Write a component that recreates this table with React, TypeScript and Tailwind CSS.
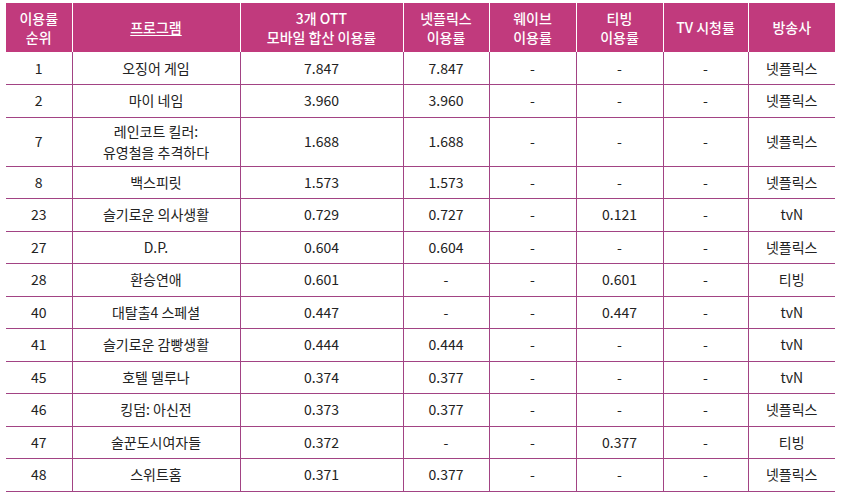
type Row = {
  rank: string;
  title: string[];
  total: string;
  netflix: string;
  wavve: string;
  tving: string;
  tv: string;
  channel: string;
};

const rows: Row[] = [
  { rank: "1", title: ["오징어 게임"], total: "7.847", netflix: "7.847", wavve: "-", tving: "-", tv: "-", channel: "넷플릭스" },
  { rank: "2", title: ["마이 네임"], total: "3.960", netflix: "3.960", wavve: "-", tving: "-", tv: "-", channel: "넷플릭스" },
  { rank: "7", title: ["레인코트 킬러:", "유영철을 추격하다"], total: "1.688", netflix: "1.688", wavve: "-", tving: "-", tv: "-", channel: "넷플릭스" },
  { rank: "8", title: ["백스피릿"], total: "1.573", netflix: "1.573", wavve: "-", tving: "-", tv: "-", channel: "넷플릭스" },
  { rank: "23", title: ["슬기로운 의사생활"], total: "0.729", netflix: "0.727", wavve: "-", tving: "0.121", tv: "-", channel: "tvN" },
  { rank: "27", title: ["D.P."], total: "0.604", netflix: "0.604", wavve: "-", tving: "-", tv: "-", channel: "넷플릭스" },
  { rank: "28", title: ["환승연애"], total: "0.601", netflix: "-", wavve: "-", tving: "0.601", tv: "-", channel: "티빙" },
  { rank: "40", title: ["대탈출4 스페셜"], total: "0.447", netflix: "-", wavve: "-", tving: "0.447", tv: "-", channel: "tvN" },
  { rank: "41", title: ["슬기로운 감빵생활"], total: "0.444", netflix: "0.444", wavve: "-", tving: "-", tv: "-", channel: "tvN" },
  { rank: "45", title: ["호텔 델루나"], total: "0.374", netflix: "0.377", wavve: "-", tving: "-", tv: "-", channel: "tvN" },
  { rank: "46", title: ["킹덤: 아신전"], total: "0.373", netflix: "0.377", wavve: "-", tving: "-", tv: "-", channel: "넷플릭스" },
  { rank: "47", title: ["술꾼도시여자들"], total: "0.372", netflix: "-", wavve: "-", tving: "0.377", tv: "-", channel: "티빙" },
  { rank: "48", title: ["스위트홈"], total: "0.371", netflix: "0.377", wavve: "-", tving: "-", tv: "-", channel: "넷플릭스" },
];

const headers: { lines: string[]; underline?: boolean }[] = [
  { lines: ["이용률", "순위"] },
  { lines: ["프로그램"], underline: true },
  { lines: ["3개 OTT", "모바일 합산 이용률"] },
  { lines: ["넷플릭스", "이용률"] },
  { lines: ["웨이브", "이용률"] },
  { lines: ["티빙", "이용률"] },
  { lines: ["TV 시청률"] },
  { lines: ["방송사"] },
];

const widths = ["w-[66px]", "w-[168px]", "w-[163px]", "w-[86px]", "w-[87px]", "w-[87px]", "w-[85px]", "w-[87px]"];

export default function App() {
  return (
    <main className="min-h-[496px] w-[842px] bg-white pl-[6px] pt-[3px] font-['Noto_Sans_CJK_KR','Noto_Sans',sans-serif] text-[14px] text-[#222]">
      <table className="w-[829px] table-fixed border-collapse">
        <colgroup>
          {widths.map((w, i) => (
            <col key={i} className={w} />
          ))}
        </colgroup>
        <thead>
          <tr className="h-[49px] bg-[#c13a7d] text-white">
            {headers.map((h, i) => (
              <th
                key={i}
                className={`p-0 text-center align-middle text-[14px] font-medium leading-[19px] ${i > 0 ? "border-l border-white" : ""}`}
              >
                {h.lines.map((line) => (
                  <div key={line} className={h.underline ? "underline underline-offset-2" : ""}>
                    {line}
                  </div>
                ))}
              </th>
            ))}
          </tr>
        </thead>
        <tbody>
          {rows.map((row) => {
            const cells = [row.rank, row.title, row.total, row.netflix, row.wavve, row.tving, row.tv, row.channel];
            const tall = row.title.length > 1;
            return (
              <tr key={row.rank} className={`border-b border-[#a24384] ${tall ? "h-[49px]" : "h-[32.5px]"}`}>
                {cells.map((cell, i) => (
                  <td
                    key={i}
                    className={`p-0 text-center align-middle leading-[21px] ${i > 0 ? "border-l border-[#a24384]" : ""}`}
                  >
                    {Array.isArray(cell) ? cell.map((line) => <div key={line}>{line}</div>) : cell}
                  </td>
                ))}
              </tr>
            );
          })}
        </tbody>
      </table>
    </main>
  );
}
